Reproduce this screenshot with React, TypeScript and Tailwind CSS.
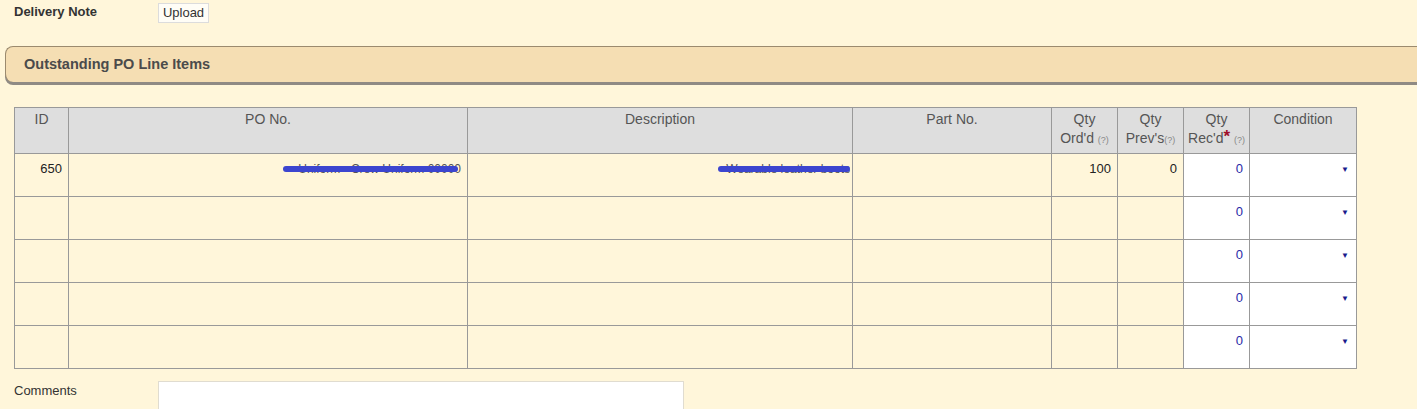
import React from "react";

const font = { fontFamily: '"Liberation Sans", Arial, sans-serif' };

function Q() {
  return <span className="text-[9px] text-[#888]">(?)</span>;
}

function Arrow() {
  return <span className="text-[8px] text-[#1a1a8c] leading-none">▼</span>;
}

export default function App() {
  const rows = [0, 1, 2, 3, 4];
  return (
    <div className="w-[1417px] h-[409px] overflow-hidden bg-[#fff6da] text-[#333]" style={font}>
      <div className="flex items-start pt-[3px] h-[46px]">
        <div className="w-[158px] pl-[14px] pt-[1px] text-[13px] leading-[16px] font-bold text-[#333]">Delivery Note</div>
        <button className="h-[20px] w-[51px] border border-[#dcdcdc] bg-[#fffdf6] text-[13px] text-[#333] leading-[18px]">Upload</button>
      </div>
      <div className="ml-[5px] h-[36px] rounded-l-[8px] border-t border-l border-[#9b8a6e] bg-[#f5deb3] shadow-[0_3px_0_#8f8a84] flex items-center pl-[18px]">
        <span className="text-[14.5px] font-bold text-[#4b4b4b]">Outstanding PO Line Items</span>
      </div>
      <div className="h-[25px]" />
      <table className="ml-[14px] border-collapse table-fixed w-[1342px] text-[13px]">
        <colgroup>
          <col className="w-[54px]" />
          <col className="w-[399px]" />
          <col className="w-[385px]" />
          <col className="w-[199px]" />
          <col className="w-[66px]" />
          <col className="w-[66px]" />
          <col className="w-[66px]" />
          <col className="w-[107px]" />
        </colgroup>
        <thead>
          <tr className="h-[46px] bg-[#dedede] text-[14px] text-[#555] align-top">
            <th className="border border-[#999] font-normal pt-[2px] leading-[19px]">ID</th>
            <th className="border border-[#999] font-normal pt-[2px] leading-[19px]">PO No.</th>
            <th className="border border-[#999] font-normal pt-[2px] leading-[19px]">Description</th>
            <th className="border border-[#999] font-normal pt-[2px] leading-[19px]">Part No.</th>
            <th className="border border-[#999] font-normal pt-[2px] leading-[19px] whitespace-nowrap">Qty<br />Ord'd <Q /></th>
            <th className="border border-[#999] font-normal pt-[2px] leading-[19px] whitespace-nowrap">Qty<br />Prev's<Q /></th>
            <th className="border border-[#999] font-normal pt-[2px] leading-[19px] whitespace-nowrap">Qty<br />Rec'd<span className="text-[#a0102a] text-[17px] font-bold leading-[10px] align-[1px]">*</span> <Q /></th>
            <th className="border border-[#999] font-normal pt-[2px] leading-[19px]">Condition</th>
          </tr>
        </thead>
        <tbody>
          {rows.map((r) => (
            <tr key={r} className="h-[43px] align-top text-[13px] text-[#222]">
              <td className="border border-[#999] text-right pr-[6px] pt-[5px]">{r === 0 ? "650" : ""}</td>
              <td className="border border-[#999] text-right pr-[6px] pt-[5px]">
                {r === 0 && (
                  <span className="relative inline-block text-[#555] text-[12px]">
                    Uniform - Crew Uniform 00000
                    <span className="absolute left-[-15px] right-[3px] top-[6px] h-[6px] rounded-full bg-[#3c45cf]" />
                  </span>
                )}
              </td>
              <td className="border border-[#999] text-right pr-[2px] pt-[5px]">
                {r === 0 && (
                  <span className="relative inline-block text-[#555] text-[12px]">
                    Wearable leather boots
                    <span className="absolute left-[-8px] right-[0px] top-[6px] h-[6px] rounded-full bg-[#3c45cf]" />
                  </span>
                )}
              </td>
              <td className="border border-[#999]" />
              <td className="border border-[#999] text-right pr-[6px] pt-[5px]">{r === 0 ? "100" : ""}</td>
              <td className="border border-[#999] text-right pr-[6px] pt-[5px]">{r === 0 ? "0" : ""}</td>
              <td className="border border-[#999] bg-white text-right pr-[6px] pt-[5px] text-[#2a2aa8]">0</td>
              <td className="border border-[#999] bg-white text-right pr-[7px] pt-[4px]"><Arrow /></td>
            </tr>
          ))}
        </tbody>
      </table>
      <div className="flex items-start mt-[12px]">
        <div className="w-[158px] pl-[14px] text-[13px] text-[#333]">Comments</div>
        <div className="w-[526px] h-[40px] bg-white border border-[#e0dcd0]" />
      </div>
    </div>
  );
}
